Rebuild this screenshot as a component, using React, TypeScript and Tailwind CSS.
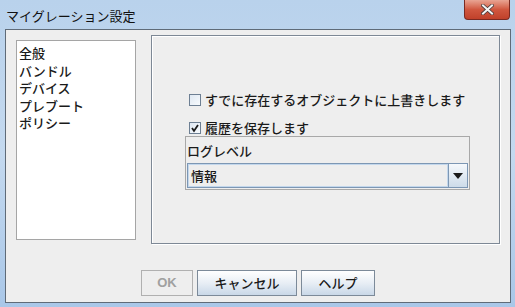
import React from "react";

const jp = { fontFamily: '"Noto Sans CJK JP", "Noto Sans", sans-serif' };

function Check({ checked }: { checked?: boolean }) {
  return (
    <div className="w-[12px] h-[12px] border border-[#6d7f93] bg-gradient-to-br from-[#dfe8f2] to-[#f7fafd] flex items-center justify-center shrink-0">
      {checked && (
        <svg width="10" height="10" viewBox="0 0 10 10">
          <path d="M2 5 L4 8 L8 2" stroke="#1a1a1a" strokeWidth="1.8" fill="none" />
        </svg>
      )}
    </div>
  );
}

export default function App() {
  return (
    <div
      className="w-[515px] h-[307px] overflow-hidden flex flex-col bg-gradient-to-b from-[#b9d2ec] via-[#c4d9ef] to-[#a9c7e8]"
      style={jp}
    >
      {/* title bar */}
      <div className="h-[29px] flex items-start shrink-0 relative">
        <div className="pl-[6px] pt-[7px] text-[13px] leading-[17px] text-[#111]">マイグレーション設定</div>
        <div className="absolute left-[464px] top-0 w-[46px] h-[20px] rounded-b-[4px] border border-t-0 border-[#7a2a22] bg-gradient-to-b from-[#e8a493] via-[#d0573f] to-[#c0402a] flex items-center justify-center">
          <svg width="13" height="11" viewBox="0 0 13 11">
            <path d="M2 1.5 L11 9.5 M11 1.5 L2 9.5" stroke="#4a3a3a" strokeWidth="3.6" strokeLinecap="square" />
            <path d="M2 1.5 L11 9.5 M11 1.5 L2 9.5" stroke="#f4f4f4" strokeWidth="2" strokeLinecap="square" />
          </svg>
        </div>
      </div>
      {/* content */}
      <div className="ml-[5px] w-[506px] h-[274px] border border-[#5f6b78] bg-[#eeeeee] flex flex-col shrink-0 font-medium">
        <div className="flex items-start pl-[10px] pt-[5px]">
          <div className="mt-[5px] w-[120px] h-[200px] border border-[#a5a5a5] bg-white pl-[2px] pt-[3px] text-[13px] text-[#1a1a1a]">
            <div className="h-[17.5px] leading-[17px]">全般</div>
            <div className="h-[17.5px] leading-[17px]">バンドル</div>
            <div className="h-[17.5px] leading-[17px]">デバイス</div>
            <div className="h-[17.5px] leading-[17px]">プレブート</div>
            <div className="h-[17.5px] leading-[17px]">ポリシー</div>
          </div>
          <div className="ml-[15px] w-[349px] h-[209px] border border-[#7d8895] shadow-[1px_1px_0_#ffffff,inset_1px_1px_0_#ffffff] flex flex-col pl-[33px] pt-[56px]">
            <div className="h-[16px] flex items-center pl-[4px] gap-[4px] text-[13px] text-[#1a1a1a]">
              <Check />
              <span>すでに存在するオブジェクトに上書きします</span>
            </div>
            <div className="h-[16px] mt-[12px] flex items-center pl-[4px] gap-[4px] text-[13px] text-[#1a1a1a]">
              <Check checked />
              <span>履歴を保存します</span>
            </div>
            <div className="mt-[0px] w-[285px] h-[54px] border border-[#a8a8a8] flex flex-col">
              <div className="h-[26px] flex items-center pl-[1px] pt-[2px] text-[13px] text-[#1a1a1a]">ログレベル</div>
              <div className="ml-[1px] w-[281px] h-[25px] border border-[#7d97b4] flex">
                <div className="flex-1 border border-[#c3d7ec] bg-[#eeeeee] flex items-center pl-[2px] text-[13px] text-[#1a1a1a]">情報</div>
                <div className="w-[19px] border-l border-[#7d97b4] bg-gradient-to-b from-[#f6f9fc] to-[#cddbe9] flex items-center justify-center">
                  <svg width="10" height="6" viewBox="0 0 10 6">
                    <path d="M0 0 L10 0 L5 6 Z" fill="#1a1a1a" />
                  </svg>
                </div>
              </div>
            </div>
          </div>
        </div>
        <div className="mt-[26px] flex justify-center gap-[4px] text-[13px]">
          <div className="w-[52px] h-[26px] border border-[#b0b0b0] flex items-center justify-center text-[#a0a0a0] font-bold" style={{ fontFamily: '"Liberation Sans", sans-serif' }}>OK</div>
          <div className="w-[100px] h-[26px] border border-[#7c8a99] bg-gradient-to-b from-[#ffffff] via-[#e8eef5] to-[#c9d8e8] flex items-center justify-center text-[#1a1a1a]">キャンセル</div>
          <div className="w-[74px] h-[26px] border border-[#7c8a99] bg-gradient-to-b from-[#ffffff] via-[#e8eef5] to-[#c9d8e8] flex items-center justify-center text-[#1a1a1a]">ヘルプ</div>
        </div>
      </div>
    </div>
  );
}
